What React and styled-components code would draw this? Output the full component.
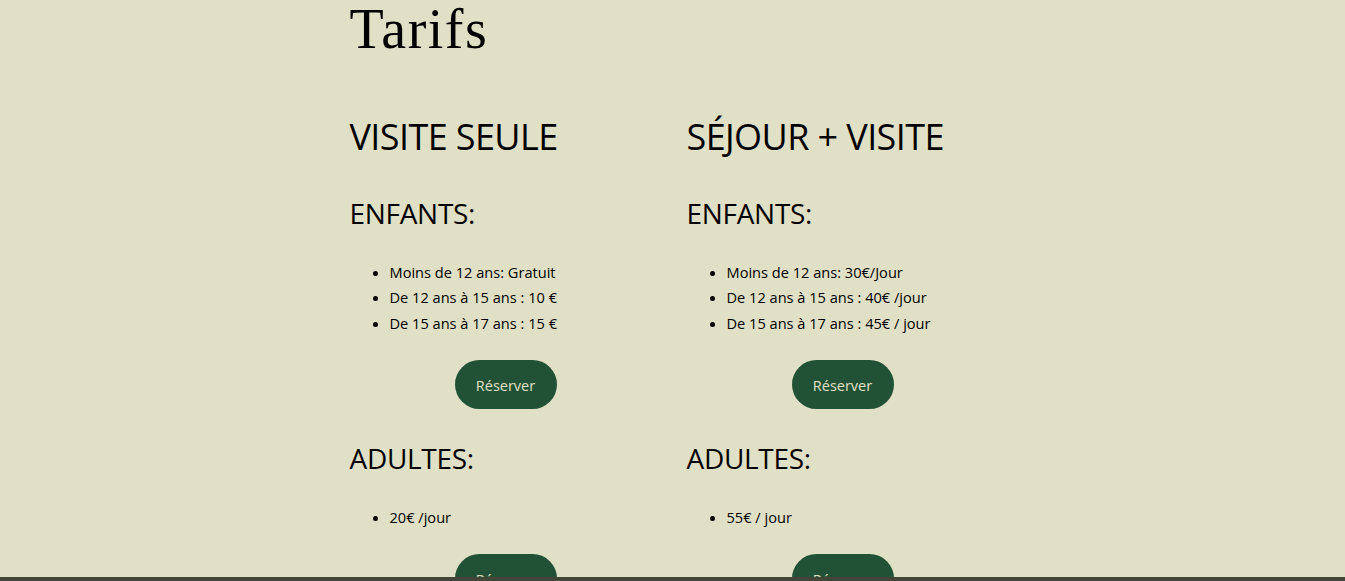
import React from "react";
import styled, { createGlobalStyle } from "styled-components";

const Global = createGlobalStyle`
  html, body { margin: 0; padding: 0; }
  body {
    background: #e0e0c6;
    color: #000;
    font-family: "Open Sans", "Noto Sans", sans-serif;
  }
`;

const Page = styled.main`
  width: 649px;
  margin: 0 auto;
  padding-left: 3px;
`;

const Title = styled.h1`
  margin: 0;
  font-family: "Liberation Serif", "DejaVu Serif", serif;
  font-weight: 400;
  font-size: 56px;
  line-height: 58px;
  letter-spacing: 1.5px;
`;

const Columns = styled.div`
  display: grid;
  grid-template-columns: 312px 312px;
  column-gap: 25px;
  margin-top: 57px;
`;

const Column = styled.section`
  display: flex;
  flex-direction: column;
  align-items: flex-start;
`;

const Heading = styled.h2`
  margin: 0;
  font-weight: 400;
  font-size: 36px;
  line-height: 44px;
  letter-spacing: -0.6px;
`;

const SubHeading = styled.h3`
  margin: ${(p) => (p.$first ? "36px" : "31px")} 0 0;
  font-weight: 400;
  font-size: 28px;
  line-height: 36px;
  letter-spacing: -0.3px;
`;

const List = styled.ul`
  margin: 28.5px 0 0;
  padding-left: 40px;
  font-size: 14.6px;
  line-height: 25.5px;
`;

const Button = styled.button`
  align-self: center;
  margin-top: 24px;
  width: 102px;
  height: 49px;
  border: none;
  border-radius: 25px;
  background: #225235;
  color: #e0e0c6;
  font-family: "Open Sans", "Noto Sans", sans-serif;
  font-size: 14.5px;
  padding-top: 2px;
  cursor: pointer;
`;

const BottomBar = styled.div`
  position: fixed;
  left: 0;
  right: 0;
  bottom: 0;
  height: 4px;
  background: #43443a;
`;

const offers = [
  {
    title: "VISITE SEULE",
    kids: ["Moins de 12 ans: Gratuit", "De 12 ans à 15 ans : 10 €", "De 15 ans à 17 ans : 15 €"],
    adults: ["20€ /jour"],
  },
  {
    title: "SÉJOUR + VISITE",
    kids: ["Moins de 12 ans: 30€/Jour", "De 12 ans à 15 ans : 40€ /jour", "De 15 ans à 17 ans : 45€ / jour"],
    adults: ["55€ / jour"],
  },
];

export default function App() {
  return (
    <>
      <Global />
      <Page>
        <Title>Tarifs</Title>
        <Columns>
          {offers.map((o) => (
            <Column key={o.title}>
              <Heading>{o.title}</Heading>
              <SubHeading $first>ENFANTS:</SubHeading>
              <List>
                {o.kids.map((k) => (
                  <li key={k}>{k}</li>
                ))}
              </List>
              <Button>Réserver</Button>
              <SubHeading>ADULTES:</SubHeading>
              <List>
                {o.adults.map((k) => (
                  <li key={k}>{k}</li>
                ))}
              </List>
              <Button>Réserver</Button>
            </Column>
          ))}
        </Columns>
      </Page>
      <BottomBar />
    </>
  );
}
